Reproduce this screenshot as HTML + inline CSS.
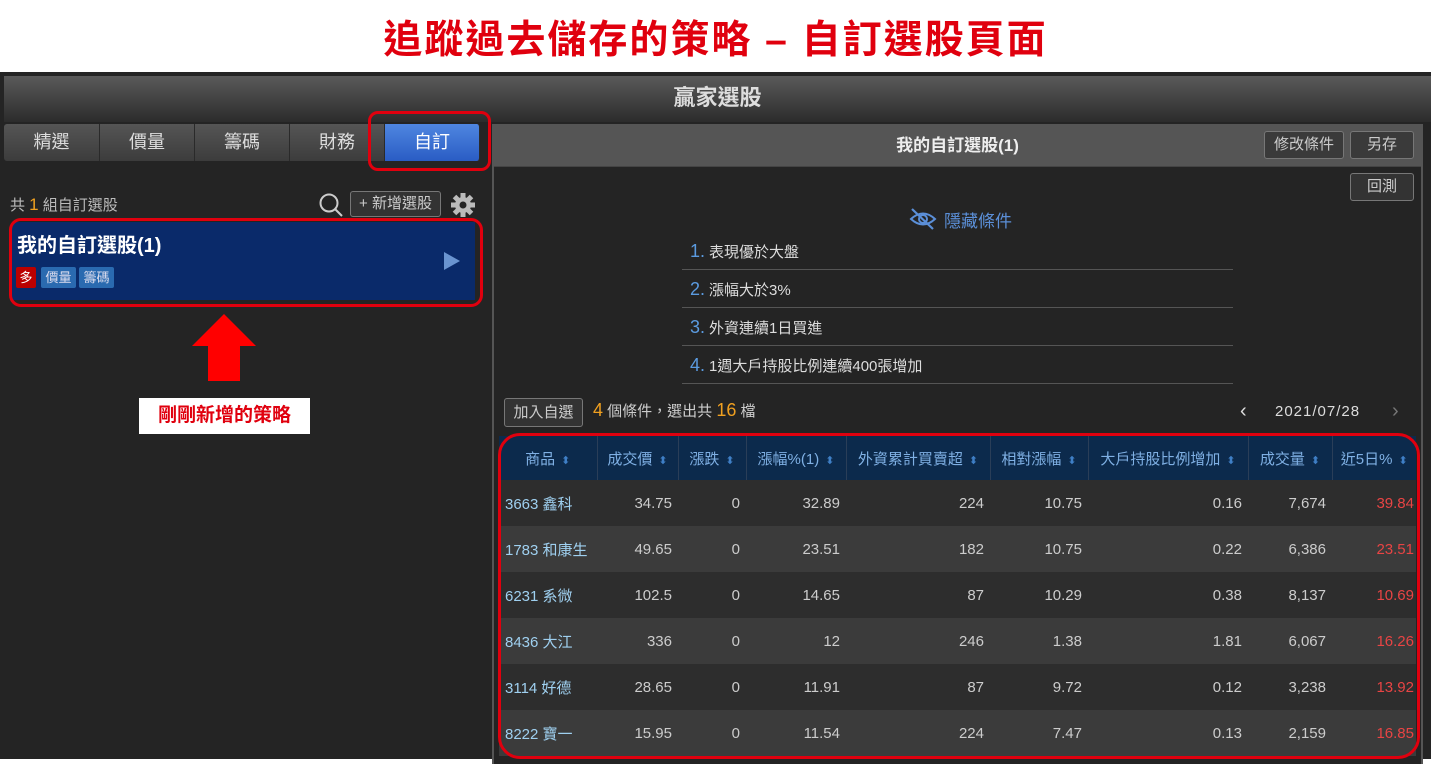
<!DOCTYPE html>
<html><head><meta charset="utf-8"><style>
*{margin:0;padding:0;box-sizing:border-box}
body{width:1431px;height:759px;overflow:hidden;background:#fff;font-family:"Liberation Sans","Noto Sans CJK TC",sans-serif;position:relative}
.a{position:absolute}
.title{left:0;width:1431px;top:13px;text-align:center;color:#e0000e;font-size:39px;font-weight:bold;line-height:56px;letter-spacing:2px}
.frame{left:0;top:72px;width:1431px;height:687px;background:#242424}
.hdr{left:4px;top:76px;width:1427px;height:46px;background:linear-gradient(#5a5a5a,#2c2c2c);color:#ddd;font-size:22px;font-weight:bold;text-align:center;line-height:44px}
.tab{top:124px;height:37px;background:linear-gradient(#555,#3c3c3c);color:#ddd;font-size:18px;text-align:center;line-height:36px;border-right:1px solid #2a2a2a}
.btn{border:1px solid #777;border-radius:3px;background:#333;color:#ccc;font-size:15px;text-align:center}
.rp{left:492px;top:124px;width:931px;height:640px;background:#242424;border:2px solid #555;border-bottom:none}
.cond{left:682px;width:551px;height:38px;border-bottom:1px solid #555;color:#ddd;font-size:15px;line-height:38px;padding-left:8px}
.cond b{color:#5b9be0;font-weight:normal;font-size:18px;margin-right:4px}
table{border-collapse:collapse;font-size:15px}
th{background:#0c2a4c;color:#7fb0e4;font-weight:normal;height:44px;border-right:1px solid #2a3e58;white-space:nowrap}
th i{font-style:normal;color:#3f7fc6;font-size:11px;margin-left:6px}
td{height:46px;color:#ccc;text-align:right;padding-right:6px}
td:first-child{text-align:left;padding-left:6px;color:#9fd0f0}
tr:nth-child(odd) td{background:#3b3b3b}
tr:nth-child(even) td{background:#2d2d2d}
td.r{color:#e84444;padding-right:2px}
</style></head><body>
<div class="a title">追蹤過去儲存的策略 – 自訂選股頁面</div>
<div class="a frame"></div>
<div class="a hdr">贏家選股</div>
<div class="a tab" style="left:4px;width:96px;border-radius:3px 0 0 3px">精選</div>
<div class="a tab" style="left:100px;width:95px">價量</div>
<div class="a tab" style="left:195px;width:95px">籌碼</div>
<div class="a tab" style="left:290px;width:95px">財務</div>
<div class="a tab" style="left:385px;width:95px;background:linear-gradient(#4f86e0,#2a5cc4);color:#fff;border-radius:0 3px 3px 0">自訂</div>
<div class="a" style="left:368px;top:111px;width:123px;height:60px;border:3px solid #e0000e;border-radius:10px"></div>
<div class="a" style="left:10px;top:194px;color:#bbb;font-size:15px">共 <span style="color:#f0a020;font-size:17px">1</span> 組自訂選股</div>
<svg class="a" style="left:318px;top:192px" width="28" height="26"><circle cx="11" cy="11" r="8.5" fill="none" stroke="#ccc" stroke-width="2"/><line x1="17" y1="17" x2="24" y2="24" stroke="#ccc" stroke-width="2"/></svg>
<div class="a btn" style="left:350px;top:191px;width:91px;height:26px;line-height:24px">+ 新增選股</div>
<svg class="a" style="left:450px;top:192px" width="26" height="26" viewBox="0 0 26 26"><g fill="#bbb"><circle cx="13" cy="13" r="8"/><g stroke="#bbb" stroke-width="5"><line x1="13" y1="1" x2="13" y2="25"/><line x1="1" y1="13" x2="25" y2="13"/><line x1="4.5" y1="4.5" x2="21.5" y2="21.5"/><line x1="21.5" y1="4.5" x2="4.5" y2="21.5"/></g></g><circle cx="13" cy="13" r="3.5" fill="#242424"/></svg>
<div class="a" style="left:12px;top:222px;width:463px;height:78px;background:#0a2a6a"></div>
<div class="a" style="left:17px;top:229px;color:#fff;font-size:20px;font-weight:bold">我的自訂選股(1)</div>
<div class="a" style="left:16px;top:267px;width:20px;height:21px;background:#b00;color:#fff;font-size:13px;text-align:center;line-height:21px;border-radius:2px">多</div>
<div class="a" style="left:41px;top:267px;width:35px;height:21px;background:#2a6ab0;color:#dde;font-size:13px;text-align:center;line-height:21px;border-radius:2px">價量</div>
<div class="a" style="left:79px;top:267px;width:35px;height:21px;background:#2a6ab0;color:#dde;font-size:13px;text-align:center;line-height:21px;border-radius:2px">籌碼</div>
<svg class="a" style="left:443px;top:251px" width="18" height="20"><polygon points="1,1 17,10 1,19" fill="#6a94d0"/></svg>
<div class="a" style="left:9px;top:218px;width:474px;height:89px;border:3px solid #e0000e;border-radius:12px"></div>
<svg class="a" style="left:190px;top:312px" width="70" height="72"><polygon points="34,2 66,34 50,34 50,69 18,69 18,34 2,34" fill="#f00"/></svg>
<div class="a" style="left:139px;top:398px;width:171px;height:36px;background:#fff;color:#e0000e;font-size:19px;font-weight:bold;text-align:center;line-height:36px">剛剛新增的策略</div>
<div class="a rp"></div>
<div class="a" style="left:494px;top:126px;width:927px;height:41px;background:#555;border-bottom:1px solid #444;color:#eee;font-size:17px;font-weight:bold;text-align:center;line-height:40px">我的自訂選股(1)</div>
<div class="a btn" style="left:1264px;top:131px;width:80px;height:28px;line-height:26px;background:#3a3a3a">修改條件</div>
<div class="a btn" style="left:1350px;top:131px;width:64px;height:28px;line-height:26px;background:#3a3a3a">另存</div>
<div class="a btn" style="left:1350px;top:173px;width:64px;height:28px;line-height:26px;background:#333">回測</div>
<svg class="a" style="left:908px;top:207px" width="30" height="24" viewBox="0 0 30 24"><path d="M3 12 Q15 1 27 12 Q15 23 3 12Z" fill="none" stroke="#5b8fd8" stroke-width="2"/><circle cx="15" cy="12" r="4" fill="none" stroke="#5b8fd8" stroke-width="2"/><line x1="4" y1="2" x2="25" y2="22" stroke="#5b8fd8" stroke-width="2.2"/></svg>
<div class="a" style="left:944px;top:207px;color:#5b8fd8;font-size:17px">隱藏條件</div>
<div class="a cond" style="top:232px"><b>1.</b>表現優於大盤</div>
<div class="a cond" style="top:270px"><b>2.</b>漲幅大於3%</div>
<div class="a cond" style="top:308px"><b>3.</b>外資連續1日買進</div>
<div class="a cond" style="top:346px"><b>4.</b>1週大戶持股比例連續400張增加</div>
<div class="a btn" style="left:504px;top:398px;width:79px;height:29px;line-height:27px;background:#333">加入自選</div>
<div class="a" style="left:593px;top:400px;color:#ccc;font-size:15px"><span style="color:#f0a020;font-size:18px">4</span> 個條件，選出共 <span style="color:#f0a020;font-size:18px">16</span> 檔</div>
<div class="a" style="left:1240px;top:400px;color:#ddd;font-size:20px">‹</div>
<div class="a" style="left:1275px;top:403px;color:#ddd;font-size:15px;letter-spacing:1px">2021/07/28</div>
<div class="a" style="left:1392px;top:400px;color:#777;font-size:20px">›</div>
<table class="a" style="left:499px;top:436px;width:917px">
<tr><th style="width:98px">商品<i>⬍</i></th><th style="width:81px">成交價<i>⬍</i></th><th style="width:68px">漲跌<i>⬍</i></th><th style="width:100px">漲幅%(1)<i>⬍</i></th><th style="width:144px">外資累計買賣超<i>⬍</i></th><th style="width:98px">相對漲幅<i>⬍</i></th><th style="width:160px">大戶持股比例增加<i>⬍</i></th><th style="width:84px">成交量<i>⬍</i></th><th style="width:84px;border-right:none">近5日%<i>⬍</i></th></tr>
<tr><td>3663 鑫科</td><td>34.75</td><td>0</td><td>32.89</td><td>224</td><td>10.75</td><td>0.16</td><td>7,674</td><td class="r">39.84</td></tr>
<tr><td>1783 和康生</td><td>49.65</td><td>0</td><td>23.51</td><td>182</td><td>10.75</td><td>0.22</td><td>6,386</td><td class="r">23.51</td></tr>
<tr><td>6231 系微</td><td>102.5</td><td>0</td><td>14.65</td><td>87</td><td>10.29</td><td>0.38</td><td>8,137</td><td class="r">10.69</td></tr>
<tr><td>8436 大江</td><td>336</td><td>0</td><td>12</td><td>246</td><td>1.38</td><td>1.81</td><td>6,067</td><td class="r">16.26</td></tr>
<tr><td>3114 好德</td><td>28.65</td><td>0</td><td>11.91</td><td>87</td><td>9.72</td><td>0.12</td><td>3,238</td><td class="r">13.92</td></tr>
<tr><td>8222 寶一</td><td>15.95</td><td>0</td><td>11.54</td><td>224</td><td>7.47</td><td>0.13</td><td>2,159</td><td class="r">16.85</td></tr>
</table>
<div class="a" style="left:498px;top:433px;width:922px;height:326px;border:3px solid #e0000e;border-radius:22px"></div>
</body></html>
